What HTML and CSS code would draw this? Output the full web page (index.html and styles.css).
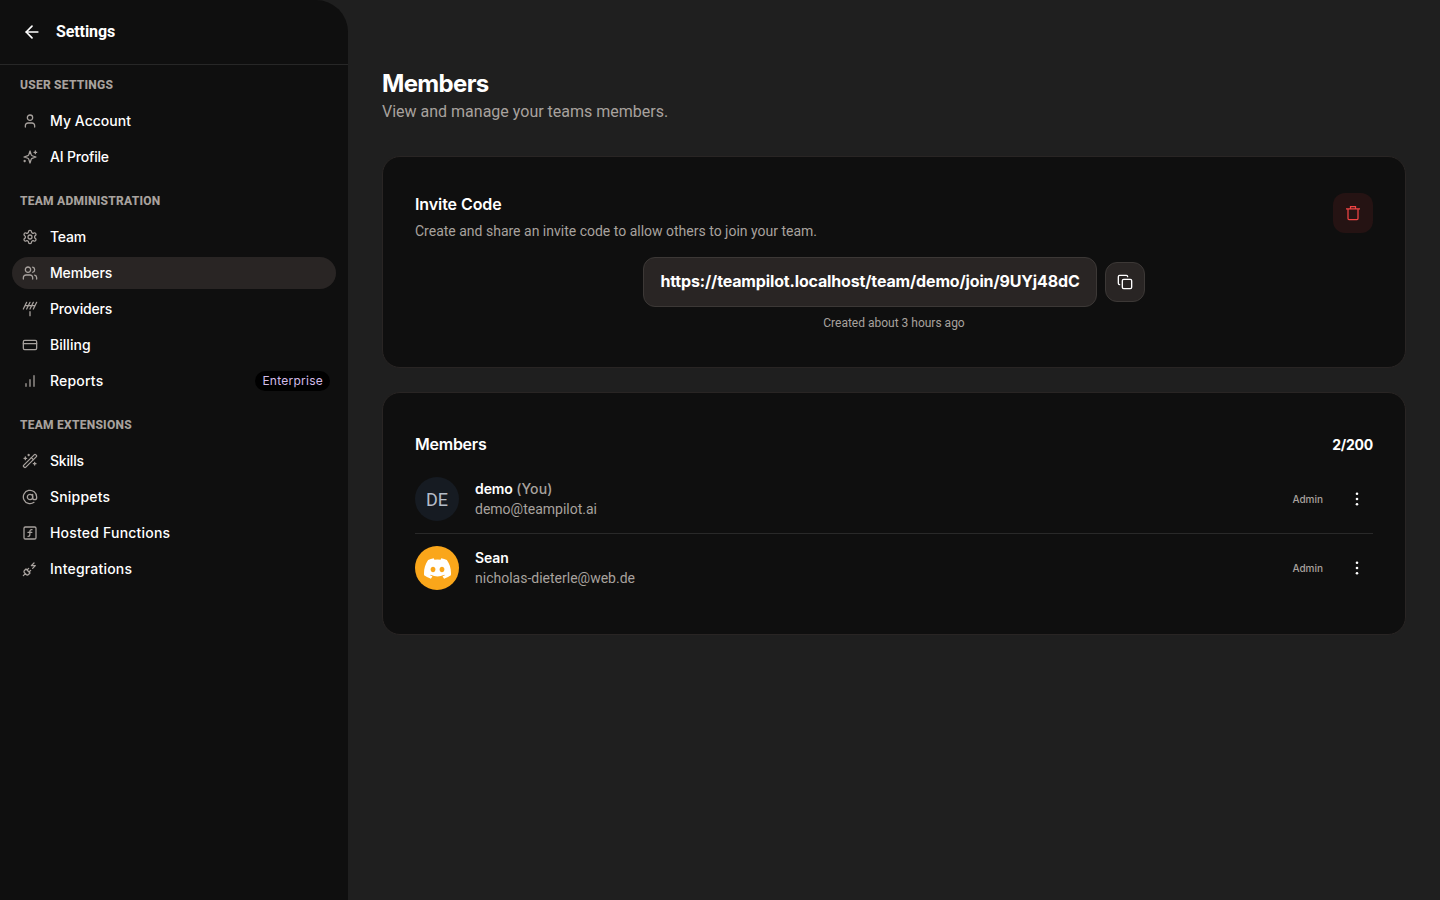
FILE: index.html
```
<!DOCTYPE html>
<html lang="en">
<head>
    <title>Members</title>
    <meta charset="UTF-8">
    <link rel="stylesheet" href="styles.css">
</head>
<body>
    <div class="app">
        <aside class="sidebar">
            <div class="sidebar-header">
                <svg class="icon icon-back" viewBox="0 0 24 24"><path d="m12 19-7-7 7-7"/><path d="M19 12H5"/></svg>
                <span class="sidebar-title">Settings</span>
            </div>

            <nav class="nav">
                <h3 class="nav-heading">USER SETTINGS</h3>
                <a class="nav-item">
                    <svg class="icon" viewBox="0 0 24 24"><circle cx="12" cy="7" r="4"/><path d="M19 21v-2a4 4 0 0 0-4-4H9a4 4 0 0 0-4 4v2"/></svg>
                    <span class="nav-label">My Account</span>
                </a>
                <a class="nav-item">
                    <svg class="icon" viewBox="0 0 24 24"><path d="m12 3-1.9 5.8a2 2 0 0 1-1.287 1.288L3 12l5.8 1.9a2 2 0 0 1 1.288 1.287L12 21l1.9-5.8a2 2 0 0 1 1.287-1.288L21 12l-5.8-1.9a2 2 0 0 1-1.288-1.287Z"/><path d="M20 3v4M22 5h-4M4 17v2M5 18H3"/></svg>
                    <span class="nav-label tight">AI Profile</span>
                </a>

                <h3 class="nav-heading">TEAM ADMINISTRATION</h3>
                <a class="nav-item">
                    <svg class="icon" viewBox="0 0 24 24"><path d="M12.22 2h-.44a2 2 0 0 0-2 2v.18a2 2 0 0 1-1 1.73l-.43.25a2 2 0 0 1-2 0l-.15-.08a2 2 0 0 0-2.73.73l-.22.38a2 2 0 0 0 .73 2.73l.15.1a2 2 0 0 1 1 1.72v.51a2 2 0 0 1-1 1.74l-.15.09a2 2 0 0 0-.73 2.73l.22.38a2 2 0 0 0 2.73.73l.15-.08a2 2 0 0 1 2 0l.43.25a2 2 0 0 1 1 1.73V20a2 2 0 0 0 2 2h.44a2 2 0 0 0 2-2v-.18a2 2 0 0 1 1-1.73l.43-.25a2 2 0 0 1 2 0l.15.08a2 2 0 0 0 2.73-.73l.22-.39a2 2 0 0 0-.73-2.73l-.15-.08a2 2 0 0 1-1-1.74v-.5a2 2 0 0 1 1-1.74l.15-.09a2 2 0 0 0 .73-2.73l-.22-.38a2 2 0 0 0-2.73-.73l-.15.08a2 2 0 0 1-2 0l-.43-.25a2 2 0 0 1-1-1.73V4a2 2 0 0 0-2-2z"/><circle cx="12" cy="12" r="3"/></svg>
                    <span class="nav-label tight">Team</span>
                </a>
                <a class="nav-item active">
                    <svg class="icon" viewBox="0 0 24 24"><path d="M16 21v-2a4 4 0 0 0-4-4H6a4 4 0 0 0-4 4v2"/><circle cx="9" cy="7" r="4"/><path d="M22 21v-2a4 4 0 0 0-3-3.87"/><path d="M16 3.13a4 4 0 0 1 0 7.75"/></svg>
                    <span class="nav-label tight">Members</span>
                </a>
                <a class="nav-item">
                    <svg class="icon" viewBox="0 0 24 24"><path d="M2 12 7 2M7 12l5-10M12 12l5-10M17 12l5-10M4.5 7h15M12 16v6"/></svg>
                    <span class="nav-label tight">Providers</span>
                </a>
                <a class="nav-item">
                    <svg class="icon" viewBox="0 0 24 24"><rect width="20" height="14" x="2" y="5" rx="2"/><path d="M2 10h20"/></svg>
                    <span class="nav-label">Billing</span>
                </a>
                <a class="nav-item">
                    <svg class="icon" viewBox="0 0 24 24"><path d="M12 20V10M18 20V4M6 20v-4"/></svg>
                    <span class="nav-label wide">Reports</span>
                    <span class="badge">Enterprise</span>
                </a>

                <h3 class="nav-heading">TEAM EXTENSIONS</h3>
                <a class="nav-item">
                    <svg class="icon" viewBox="0 0 24 24"><path d="m21.64 3.64-1.28-1.28a1.21 1.21 0 0 0-1.72 0L2.36 18.64a1.21 1.21 0 0 0 0 1.72l1.28 1.28a1.2 1.2 0 0 0 1.72 0L21.64 5.36a1.2 1.2 0 0 0 0-1.72Z"/><path d="m14 7 3 3M5 6v4M19 14v4M10 2v2M7 8H3M21 16h-4M11 3H9"/></svg>
                    <span class="nav-label tight">Skills</span>
                </a>
                <a class="nav-item">
                    <svg class="icon" viewBox="0 0 24 24"><circle cx="12" cy="12" r="4"/><path d="M16 8v5a3 3 0 0 0 6 0v-1a10 10 0 1 0-4 8"/></svg>
                    <span class="nav-label wide">Snippets</span>
                </a>
                <a class="nav-item">
                    <svg class="icon" viewBox="0 0 24 24"><rect width="18" height="18" x="3" y="3" rx="2"/><path d="M9 17c2 0 2.8-1 2.8-2.8V10c0-2 1-3.3 3.2-3"/><path d="M9 11.2h5.7"/></svg>
                    <span class="nav-label wide">Hosted Functions</span>
                </a>
                <a class="nav-item">
                    <svg class="icon" viewBox="0 0 24 24"><path d="m18 3-4 4h6l-4 4"/><path d="M6.3 20.3a2.4 2.4 0 0 0 3.400 0L12 18l-6-6-2.300 2.300a2.400 2.400 0 0 0 0 3.400ZM2 22l3-3M7.500 13.500 10 11M10.500 16.500 13 14"/></svg>
                    <span class="nav-label wide">Integrations</span>
                </a>
            </nav>
        </aside>

        <main class="main">
            <h1 class="page-title">Members</h1>
            <p class="page-subtitle">View and manage your teams members.</p>

            <section class="card invite">
                <div class="card-header">
                    <div>
                        <h2 class="card-title invite-title">Invite Code</h2>
                        <p class="card-text">Create and share an invite code to allow others to join your team.</p>
                    </div>
                    <button class="btn btn-delete">
                        <svg class="icon-trash" viewBox="0 0 20 20"><path d="M7.500 5.800V3.700h5v2.100M3 5.800h14M5 5.800v9.700c0 .6.400 1 1 1h8c.6 0 1-.4 1-1V5.800"/></svg>
                    </button>
                </div>
                <div class="code-row">
                    <div class="code">https://teampilot.localhost/team/demo/join/9UYj48dC</div>
                    <button class="btn btn-copy">
                        <svg class="icon" viewBox="0 0 24 24"><rect width="14" height="14" x="8" y="8" rx="2"/><path d="M4 16c-1.100 0-2-.9-2-2V4c0-1.100.9-2 2-2h10c1.100 0 2 .9 2 2"/></svg>
                    </button>
                </div>
                <p class="created">Created about 3 hours ago</p>
            </section>

            <section class="card members">
                <div class="members-header">
                    <h2 class="card-title">Members</h2>
                    <span class="count">2/200</span>
                </div>
                <div class="member">
                    <div class="avatar">DE</div>
                    <div class="member-info">
                        <p class="member-name">demo <span class="you">(You)</span></p>
                        <p class="card-text">demo@teampilot.ai</p>
                    </div>
                    <span class="role">Admin</span>
                    <svg class="dots" viewBox="0 0 16 16"><circle cx="8" cy="2.800" r="1.300"/><circle cx="8" cy="8" r="1.300"/><circle cx="8" cy="13.200" r="1.300"/></svg>
                </div>
                <div class="member">
                    <div class="avatar avatar-discord">
                        <svg viewBox="0 0 127.140 96.360" width="27" height="21"><path fill="#fff" d="M107.700 8.070A105.150 105.150 0 0 0 81.470 0a72.060 72.060 0 0 0-3.360 6.830 97.680 97.680 0 0 0-29.110 0A72.370 72.370 0 0 0 45.640 0a105.890 105.890 0 0 0-26.250 8.090C2.790 32.650-1.710 56.600.540 80.210a105.730 105.730 0 0 0 32.170 16.150 77.700 77.700 0 0 0 6.890-11.110 68.420 68.420 0 0 1-10.850-5.180c.91-.66 1.800-1.340 2.660-2a75.570 75.570 0 0 0 64.320 0c.87.71 1.760 1.390 2.660 2a68.680 68.680 0 0 1-10.870 5.190 77 77 0 0 0 6.890 11.100 105.250 105.250 0 0 0 32.190-16.140c2.640-27.380-4.510-51.110-18.900-72.150ZM42.450 65.690C36.180 65.690 31 60 31 53s5-12.740 11.430-12.740S54 46 53.890 53s-5.050 12.690-11.440 12.690Zm42.240 0C78.410 65.690 73.250 60 73.250 53s5-12.740 11.440-12.740S96.230 46 96.120 53s-5.040 12.690-11.430 12.690Z"/></svg>
                    </div>
                    <div class="member-info">
                        <p class="member-name">Sean</p>
                        <p class="card-text">nicholas-dieterle@web.de</p>
                    </div>
                    <span class="role">Admin</span>
                    <svg class="dots" viewBox="0 0 16 16"><circle cx="8" cy="2.800" r="1.300"/><circle cx="8" cy="8" r="1.300"/><circle cx="8" cy="13.200" r="1.300"/></svg>
                </div>
            </section>
        </main>
    </div>
</body>
</html>
```
FILE: styles.css
```
* {
    box-sizing: border-box;
    margin: 0;
    padding: 0;
}
body {
    background-color: #1f1f1f;
    color: #fff;
    font-family: Roboto, "Liberation Sans", sans-serif;
    overflow: hidden;
}
.app {
    display: flex;
    height: 100vh;
}
.icon {
    width: 16px;
    height: 16px;
    flex-shrink: 0;
    fill: none;
    stroke: currentColor;
    stroke-width: 2;
    stroke-linecap: round;
    stroke-linejoin: round;
}

/* Sidebar */
.sidebar {
    width: 348px;
    flex-shrink: 0;
    background-color: #0f0f0f;
    border-top-right-radius: 32px;
}
.sidebar-header {
    display: flex;
    align-items: center;
    gap: 14px;
    height: 65px;
    padding: 0 22px 1px;
    border-bottom: 1px solid #272727;
}
.icon-back {
    width: 20px;
    height: 20px;
}
.sidebar-title {
    font-size: 16px;
    font-weight: 700;
    letter-spacing: -0.1px;
}
.nav {
    display: flex;
    flex-direction: column;
    gap: 4px;
    padding: 12px;
}
.nav-heading {
    height: 16px;
    margin: 0 8px 8px;
    color: #a8a29e;
    font-size: 12px;
    line-height: 16px;
    font-weight: 800;
    letter-spacing: 0.25px;
}
.nav-item + .nav-heading {
    margin-top: 16px;
}
.nav-item {
    display: flex;
    align-items: center;
    gap: 12px;
    height: 32px;
    padding: 0 6px 0 10px;
    border-radius: 16px;
    font-family: Inter, sans-serif;
    font-size: 14px;
    font-weight: 500;
}
.nav-item .icon {
    color: #a8a29e;
    stroke-width: 1.9;
}
.nav-item.active {
    background-color: #292524;
}
.nav-label {
    padding-bottom: 2px;
    letter-spacing: 0.04px;
}
.nav-label.tight {
    letter-spacing: -0.18px;
}
.nav-label.wide {
    letter-spacing: 0.2px;
}
.badge {
    margin-left: auto;
    padding: 0 7px;
    border-radius: 10px;
    background-color: #000;
    color: #d3bce8;
    font-size: 12px;
    line-height: 20px;
    font-weight: 400;
    letter-spacing: 0.25px;
}

/* Content */
.main {
    flex: 1;
    padding: 68px 34px 0;
}
.page-title {
    font-family: Inter, sans-serif;
    font-size: 24px;
    line-height: 32px;
    font-weight: 700;
    letter-spacing: -0.65px;
}
.page-subtitle {
    color: #a8a29e;
    font-size: 16px;
    line-height: 24px;
}
.card {
    border: 1px solid #292524;
    border-radius: 18px;
    background-color: #0f0f0f;
}
.card-title {
    height: 24px;
    font-family: Inter, sans-serif;
    font-size: 16px;
    line-height: 23px;
    font-weight: 600;
    letter-spacing: -0.25px;
}
.card-text {
    color: #a8a29e;
    font-size: 14px;
    line-height: 20px;
}
.invite {
    height: 212px;
    margin-top: 32px;
    padding: 36px 32px;
}
.card-header {
    display: flex;
    justify-content: space-between;
    align-items: flex-start;
}
.invite-title {
    margin-bottom: 4px;
    letter-spacing: -0.08px;
}
.btn {
    display: flex;
    align-items: center;
    justify-content: center;
    width: 40px;
    height: 40px;
    border: none;
    border-radius: 12px;
}
.btn-delete {
    background-color: #251313;
    color: #ef4444;
}
.icon-trash {
    width: 20px;
    height: 20px;
    fill: none;
    stroke: currentColor;
    stroke-width: 1.25;
}
.btn-copy {
    border: 1px solid #3c3836;
    background-color: #292524;
    color: #fff;
}
.code-row {
    display: flex;
    align-items: center;
    justify-content: center;
    gap: 8px;
    margin-top: 16px;
}
.code {
    width: 454px;
    height: 50px;
    border: 1px solid #3c3836;
    border-radius: 12px;
    background-color: #292524;
    font-family: Inter, sans-serif;
    font-size: 16px;
    line-height: 47px;
    font-weight: 700;
    letter-spacing: -0.15px;
    text-align: center;
    white-space: nowrap;
}
.created {
    margin-top: 8px;
    color: #a8a29e;
    font-size: 12px;
    line-height: 16px;
    text-align: center;
}
.members {
    margin-top: 24px;
    padding: 40px 32px 32px;
}
.members-header {
    display: flex;
    justify-content: space-between;
    margin-bottom: 8px;
}
.count {
    font-family: Inter, sans-serif;
    font-size: 14px;
    line-height: 24px;
    font-weight: 700;
    letter-spacing: -0.25px;
}
.member {
    display: flex;
    align-items: center;
    height: 68px;
}
.member + .member {
    height: 69px;
    border-top: 1px solid #292929;
}
.avatar {
    display: flex;
    align-items: center;
    justify-content: center;
    width: 44px;
    height: 44px;
    margin-right: 16px;
    border-radius: 50%;
    background-color: #161b22;
    color: #b4bcc8;
    font-size: 18px;
}
.avatar-discord {
    background-color: #faa61a;
}
.member-info {
    flex: 1;
}
.member-name {
    font-family: Inter, sans-serif;
    font-size: 14px;
    line-height: 20px;
    font-weight: 600;
    letter-spacing: -0.1px;
}
.you {
    color: #a8a29e;
    font-weight: 500;
    letter-spacing: 0.1px;
}
.role {
    color: #a8a29e;
    font-family: Inter, sans-serif;
    font-size: 10px;
    font-weight: 500;
}
.dots {
    width: 16px;
    height: 16px;
    margin: 0 8px 0 26px;
    fill: #fff;
}
```
